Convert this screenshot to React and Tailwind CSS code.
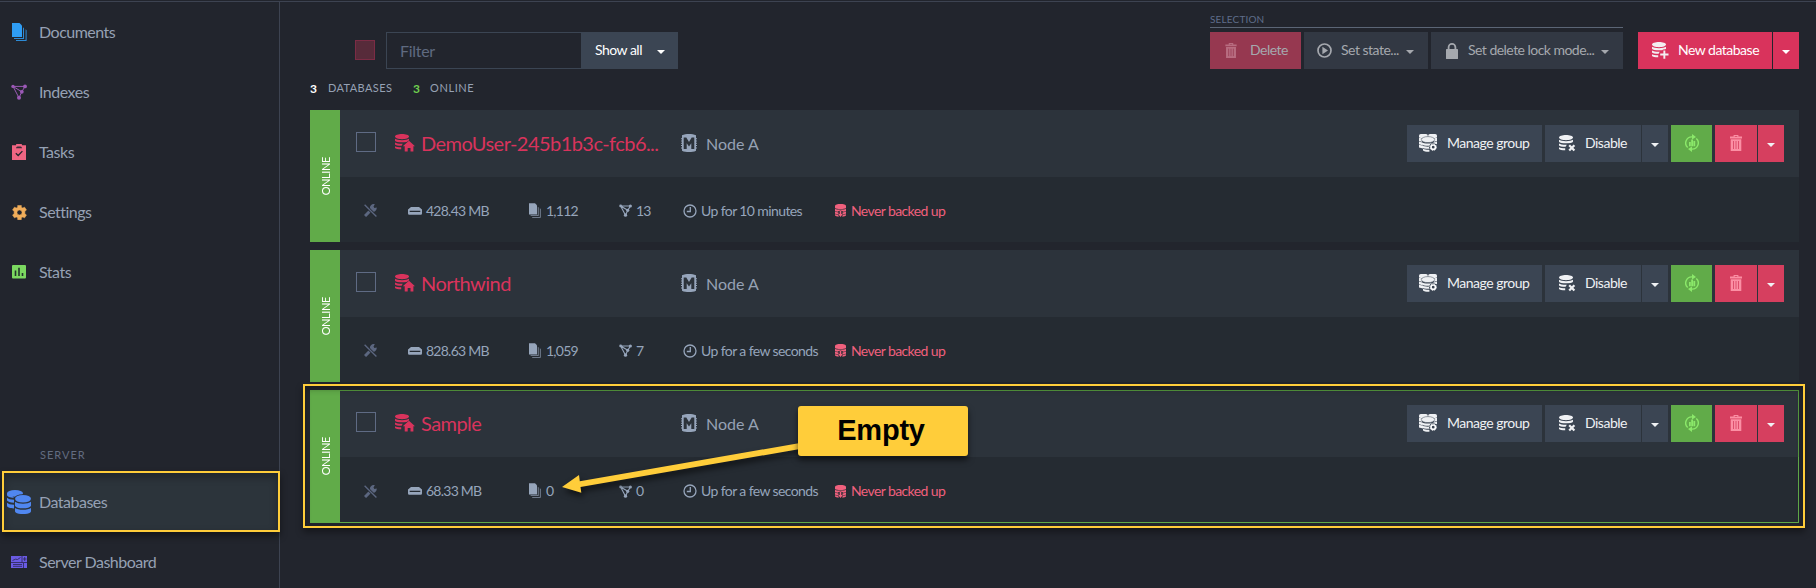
import React from "react";

/* ---------- icons ---------- */

const DocsIcon = ({ className }) => (
  <svg className={"shrink-0 " + className} viewBox="0 0 15 18" fill="currentColor">
    <path d="M0 0h7.500l2.500 2.500V14H0z" />
    <path d="M11 4.2l1 1V16H2v-1h9z" opacity=".85" />
    <path d="M13.6 6.2l1 1V18H4v-1h9.6z" opacity=".85" />
  </svg>
);

const IndexIcon = ({ className, weight = 1 }) => (
  <svg className={"shrink-0 " + className} viewBox="0 0 16 16" fill="currentColor" stroke="currentColor">
    <path d="M2 2.4h12M2 2.4l6 11.4M2 2.4l8.8 5.4M14 2.4l-3.2 5.4M10.8 7.8L8 13.8" fill="none" strokeWidth={weight} />
    <circle cx="2" cy="2.4" r="1.700" stroke="none" />
    <circle cx="14" cy="2.4" r="1.900" stroke="none" />
    <circle cx="10.8" cy="7.8" r="1.900" stroke="none" />
    <circle cx="8" cy="13.8" r="2" stroke="none" />
  </svg>
);

const TasksIcon = ({ className }) => (
  <svg className={className} viewBox="0 0 14 16">
    <path d="M0 1.2h4a3 2 0 0 1 6 0h4V16H0z" fill="currentColor" />
    <path d="M4 4.2c0-1.4 1-1.8 3-1.8s3 .4 3 1.8z" fill="#3a2c38" />
    <path d="M3.8 9.2l2.4 2.3 4.2-4.4" fill="none" stroke="#22252d" strokeWidth="1.3" />
  </svg>
);

const GearIcon = ({ className }) => (
  <svg className={className} viewBox="0 0 16 16">
    <path
      fill="currentColor"
      fillRule="evenodd"
      stroke="currentColor"
      strokeWidth=".6"
      strokeLinejoin="round"
      d="M6.1 .4h3.800v2l1.600.9 1.900-1 2 3.100-1.700 1.200v2.800l1.700 1.200-2 3.100-1.900-1-1.600.9v2H6.100v-2l-1.600-.9-1.900 1-2-3.100 1.700-1.200V6.600L.600 5.400l2-3.100 1.900 1 1.600-.9zM8 5.300a2.700 2.700 0 1 0 0 5.400 2.700 2.700 0 0 0 0-5.400z"
    />
  </svg>
);

const StatsIcon = ({ className }) => (
  <svg className={className} viewBox="0 0 14 14">
    <rect width="14" height="13.500" rx="1" fill="currentColor" />
    <path d="M2.700 5.500h1.600v5.500H2.700zM6.200 2.700h1.600V11H6.200zM9.700 8h1.600v3H9.700z" fill="#22352b" />
  </svg>
);

const DatabasesIcon = ({ className }) => (
  <svg className={className} viewBox="0 0 24 24" fill="currentColor">
    <ellipse cx="8" cy="3.400" rx="8" ry="3.400" />
    <path d="M0 3.400h3l4 4.400c-4 0-7-1.200-7-3z" />
    <path d="M0 7.800c1.200 1.200 3.400 1.900 7 2v3c-4-.2-6-1-7-2.200zM0 12.800c1.200 1.200 3.400 1.800 7 2v3.600c-4-.3-7-1.200-7-3z" />
    <ellipse cx="16" cy="9" rx="9" ry="4.800" fill="#2c333b" />
    <ellipse cx="16" cy="8.800" rx="8" ry="3.800" />
    <path d="M8 11.800c3 2.500 13 2.500 16 0v4c-1 3.400-15 3.400-16 0zM8 18c3 2.400 13 2.400 16 0v3.400c-1 3.600-15 3.600-16 0z" />
  </svg>
);

const DashboardIcon = ({ className }) => (
  <svg className={className} viewBox="0 0 16 12">
    <rect width="16" height="12" fill="currentColor" />
    <path d="M0 6.500h16M11 0v6.500M1.500 4.500l3-1.300 2 .3 3-2M2 8.500h9M2 10.300h9M12.500 7v5M12 3h3.500M13.700 1v4" fill="none" stroke="#2b2750" strokeWidth=".8" />
  </svg>
);

const stack = (
  <>
    <path d="M0 2.600C0 1 3.200 0 7 0s7 1 7 2.600S10.800 5.200 7 5.200 0 4.200 0 2.600z" />
    <path d="M0 4.800c2 1.900 12 1.900 14 0v2c-1 2-13 2-14 0z" />
    <path d="M0 8.600c1.200.8 4 1.300 7.800 1.200L6.600 11.800C3 11.800.5 11.200 0 10.400z" />
    <path d="M0 12.200c1.200.7 3.200 1 6.200 1.100v2C3 15.300.6 14.800 0 14z" />
  </>
);

const DbHomeIcon = ({ className }) => (
  <svg className={"shrink-0 " + className} viewBox="0 0 20 18" fill="currentColor">
    {stack}
    <path d="M14 6.800l6 5.400h-1.600v5.200h-2.900v-3.400h-2.800v3.400h-3v-5.200H7.800z" stroke="#2c333b" strokeWidth=".9" paintOrder="stroke" />
  </svg>
);

const DbPlusIcon = ({ className }) => (
  <svg className={"shrink-0 " + className} viewBox="0 0 17 17" fill="currentColor">
    {stack}
    <path d="M10.800 7.400h3.200v3h3v3.800h-3v3h-3.600v-3H7.600v-3.600h3.200z" className="fill-[#d9335c]" />
    <path d="M11.400 8.600h1.900v3h3.200v1.900h-3.200v3.200h-1.900v-3.200H8.200v-1.900h3.200z" />
  </svg>
);

const DbXIcon = ({ className }) => (
  <svg className={"shrink-0 " + className} viewBox="0 0 17 17" fill="currentColor">
    {stack}
    <path d="M8.400 8.800h8.500v8.200H8.400z" className="fill-[#3b4553]" />
    <path d="M10.200 10.200l5.200 5.400M15.400 10.200l-5.200 5.400" stroke="currentColor" strokeWidth="2.200" />
  </svg>
);

const DbGroupIcon = ({ className }) => (
  <svg className={"shrink-0 " + className} viewBox="0 0 18 18">
    <g fill="#eef0f3">
      <rect x="0" y="0" width="8.800" height="4" rx="1.800" />
      <rect x="9.200" y="0" width="8.800" height="4" rx="1.800" />
      <path d="M0 3.500l3 1v3.200l-3-.8zM0 7.400l3 1v2.600l-3-.8zM0 10.800l4 1v2.600l-4-.9zM18 3.500l-3 1v3.200l3-.8zM18 7.500l-3 1v1.300l3 .4z" />
      <ellipse cx="9" cy="5.600" rx="6.700" ry="3" stroke="#3b4553" strokeWidth=".5" />
      <path d="M2.600 7.900c2 2 10.800 2 12.800 0v2.300c-2 2-10.800 2-12.800 0zM2.800 11.200c1.600 1.200 4.800 1.600 7.600 1.400v2.200c-3.600.1-6.600-.3-7.600-1.600zM4 14.800c1.600.8 4 1.100 6.400 1v2c-2.800.1-5.400-.2-6.400-1.300z" />
    </g>
    <circle cx="14.200" cy="13.200" r="3.900" fill="#3b4553" />
    <circle cx="14.200" cy="13.200" r="2.200" fill="none" stroke="#fff" strokeWidth="1.600" />
    <circle cx="14.200" cy="13.200" r="3.200" fill="none" stroke="#fff" strokeWidth=".9" strokeDasharray="1.400 1.100" />
  </svg>
);

const NodeIcon = ({ className }) => (
  <svg className={"shrink-0 " + className} viewBox="0 0 16 18">
    <path
      fill="currentColor"
      fillRule="evenodd"
      d="M1 1.300C3 .3 5.400 0 8 0s5 .3 7 1.300v2.900h1v1h-1v1.300h1v1h-1v1.300h1v1h-1v1.300h1v1h-1v1.300h1v1h-1v2.300C13 17.700 10.600 18 8 18s-5-.3-7-1.300v-2.300H0v-1h1v-1.300H0v-1h1V9.800H0v-1h1V7.500H0v-1h1V5.200H0v-1h1zM2.700 3.500v11.500h3V9.200L8 12.400l2.300-3.200V15h3V3.500h-2.600L8 7.900 5.300 3.500z"
    />
  </svg>
);

const ToolsOffIcon = ({ className }) => (
  <svg className={"shrink-0 " + className} viewBox="0 0 13 13" fill="none" stroke="currentColor">
    <path d="M1 12l5.500-5.500" strokeWidth="3" />
    <path d="M5.800 4.300c0-3 2.600-4.800 5-4L9.500 2.600l.9 1.300 2.300-.5c.4 2.500-1.600 4.900-4.600 4.600z" fill="currentColor" stroke="none" />
    <path d="M.6.800l11.800 11.700" stroke="#252b32" strokeWidth="2.800" />
    <path d="M.6.800l11.800 11.700" strokeWidth="1.300" />
  </svg>
);

const DriveIcon = ({ className }) => (
  <svg className={"shrink-0 " + className} viewBox="0 0 14 8">
    <path
      d="M3 0h8l3 2.600v4a1.200 1.200 0 0 1-1.200 1.200H1.200A1.200 1.200 0 0 1 0 6.600v-4zM1.700 3.800v1.100h10.600V3.800z"
      fill="currentColor"
      fillRule="evenodd"
    />
  </svg>
);

const ClockIcon = ({ className }) => (
  <svg className={"shrink-0 " + className} viewBox="0 0 14 14" fill="none" stroke="currentColor">
    <circle cx="7" cy="7" r="6" strokeWidth="1.300" />
    <path d="M7.300 3v4.500H3.800" strokeWidth="1.300" />
  </svg>
);

const BackupIcon = ({ className }) => (
  <svg className={"shrink-0 " + className} viewBox="0 0 11 13" fill="currentColor">
    <path d="M0 1.700C0 .6 2.500 0 5.500 0S11 .6 11 1.700v2.300c-1 1.300-10 1.300-11 0z" />
    <path d="M0 4.700c2 1.200 9 1.200 11 0v2.500l-2.400.6L5.500 6.300 2.400 7.800 0 7.200zM0 7.800l3.500.8v1.700L0 9.800zM11 7.800l-3.500.8v1.700l3.500-.5zM0 10.300l3 .5 1 1.700c-2 0-3.800-.5-4-1zM11 10.300l-3 .5-1 1.700c2 0 3.800-.5 4-1zM4.700 6.800h1.600V10h1.500L5.500 13 3.200 10h1.500z" />
  </svg>
);

const TrashIcon = ({ className, line }) => (
  <svg className={"shrink-0 " + className} viewBox="0 0 12 16">
    <path d="M0 1.500h3.600V0h4.800v1.500H12v1.900H0zM4.700 1v.7h2.600V1zM.7 4.300h10.600V16H.7z" fill="currentColor" fillRule="evenodd" />
    <path d="M3.500 6v8M6 6v8M8.500 6v8" stroke={line} strokeWidth=".8" />
  </svg>
);

const PlayIcon = ({ className }) => (
  <svg className={"shrink-0 " + className} viewBox="0 0 15 15">
    <circle cx="7.500" cy="7.500" r="6.500" fill="none" stroke="currentColor" strokeWidth="1.700" />
    <path d="M5.400 3.800l5.600 3.700-5.600 3.700z" fill="currentColor" />
  </svg>
);

const LockIcon = ({ className }) => (
  <svg className={"shrink-0 " + className} viewBox="0 0 12 16">
    <rect y="6" width="12" height="10" rx=".6" fill="currentColor" />
    <path d="M2.600 7V4.300a3.400 3.400 0 0 1 6.800 0V7" fill="none" stroke="currentColor" strokeWidth="1.800" />
  </svg>
);

const RefreshStatsIcon = ({ className }) => (
  <svg className={"shrink-0 " + className} viewBox="0 0 14 18">
    <path d="M2.700 13.600A6.200 6.200 0 0 1 7.500 2.900M11.300 4.400a6.200 6.200 0 0 1-4.800 10.700" fill="none" stroke="currentColor" strokeWidth="1.400" />
    <path d="M7 0l4 2.900L7 5.600zM7 18l-4-2.900 4-2.700z" fill="currentColor" />
    <path d="M4 8h1.800v4.200H4zM6.200 5.500H8v6.700H6.200zM8.400 7h1.800v5.200H8.400z" fill="currentColor" />
  </svg>
);

const Caret = ({ className = "" }) => (
  <svg className={"h-1 w-2 shrink-0 " + className} viewBox="0 0 8 4" fill="currentColor">
    <path d="M0 0h8L4 4z" />
  </svg>
);

/* ---------- sidebar ---------- */

function NavItem({ icon, label }) {
  return (
    <div className="flex h-[60px] shrink-0 items-center">
      <div className="mr-px flex w-[38px] justify-center">{icon}</div>
      <span className="tracking-[-0.5px]">{label}</span>
    </div>
  );
}

function Sidebar() {
  return (
    <nav className="flex w-[280px] shrink-0 flex-col border-r border-[#3d4351] text-base text-[#96a1b4]">
      <NavItem icon={<DocsIcon className="h-[18px] w-[15px] text-[#2f9df4]" />} label="Documents" />
      <NavItem icon={<IndexIcon className="size-4 text-[#9b59b6]" />} label="Indexes" />
      <NavItem icon={<TasksIcon className="h-4 w-3.5 text-[#f06582]" />} label="Tasks" />
      <NavItem icon={<GearIcon className="size-[15px] text-[#f0ad5a]" />} label="Settings" />
      <NavItem icon={<StatsIcon className="size-3.5 text-[#7bd860]" />} label="Stats" />
      <div className="mt-[143px] h-[26px] shrink-0 pl-10 text-[11px] leading-[20px] tracking-[1px] text-[#626c80]">SERVER</div>
      <div className="relative z-10 -mr-px ml-0.5 h-[61px] shrink-0 border-2 border-[#ffcd3a] bg-[#2c343b] shadow-[0_4px_7px_rgba(0,0,0,.45),inset_0_4px_8px_rgba(0,0,0,.3)]">
        <div className="-ml-1 -mt-px">
          <NavItem icon={<DatabasesIcon className="size-6 shrink-0 text-[#5087f0]" />} label="Databases" />
        </div>
      </div>
      <NavItem icon={<DashboardIcon className="h-3 w-4 text-[#6a5be2]" />} label="Server Dashboard" />
    </nav>
  );
}

/* ---------- toolbar ---------- */

const btn = "flex h-[37px] items-center whitespace-nowrap text-sm tracking-[-0.5px]";

function Toolbar() {
  return (
    <div className="flex h-[67px] items-end">
      <div className="mb-[9px] ml-[45px] size-5 border border-[#7c2c45] bg-[#572b3a]" />
      <div className="ml-[11px] flex h-[37px]">
        <div className="w-[195px] border border-r-0 border-[#3b4553] pl-[13px] text-base leading-[36px] tracking-[-0.3px] text-[#5f6a80]">
          Filter
        </div>
        <div className={btn + " w-[97px] justify-between bg-[#3b4553] pl-3.5 pr-[13px] text-white"}>
          <span className="pb-0.5">Show all</span>
          <Caret className="mt-0.5" />
        </div>
      </div>

      <div className="ml-[532px] w-[413px]">
        <div className="mb-1 border-b border-[#5b6575] text-[10px] leading-[15px] tracking-[0.15px] text-[#5f6d8a]">SELECTION</div>
        <div className="flex gap-[3px] text-[#a5a8ae]">
          <div className={btn + " w-[91px] bg-[#963850] pl-[15px]"}>
            <TrashIcon className="h-[15px] w-3 text-[#b86c80]" line="#963850" />
            <span className="pb-0.5 pl-[13px]">Delete</span>
          </div>
          <div className={btn + " w-[124px] bg-[#323843] pl-[13px]"}>
            <PlayIcon className="size-[15px]" />
            <span className="pb-0.5 pl-[9px]">Set state...</span>
            <Caret className="ml-[7px] mt-0.5" />
          </div>
          <div className={btn + " w-[192px] bg-[#323843] pl-[15px]"}>
            <LockIcon className="h-4 w-3" />
            <span className="pb-0.5 pl-[10px] tracking-[-0.53px]">Set delete lock mode...</span>
            <Caret className="ml-[7px] mt-0.5" />
          </div>
        </div>
      </div>

      <div className="ml-[15px] flex gap-px text-white">
        <div className={btn + " w-[134px] bg-[#d9335c] pl-3.5"}>
          <DbPlusIcon className="size-[17px] text-[#f3eef1]" />
          <span className="pb-0.5 pl-[9px]">New database</span>
        </div>
        <div className={btn + " w-[26px] justify-center bg-[#d9335c]"}>
          <Caret className="mt-0.5" />
        </div>
      </div>
    </div>
  );
}

/* ---------- database cards ---------- */

function Actions() {
  return (
    <div className="mr-[15px] flex gap-[3px] text-[#eff1f4]">
      <div className={btn + " w-[135px] bg-[#3b4553] pl-3"}>
        <DbGroupIcon className="mb-0.5 size-[18px]" />
        <span className="pb-0.5 pl-2.5">Manage group</span>
      </div>
      <div className="flex gap-px">
        <div className={btn + " w-24 bg-[#3b4553] pl-3.5"}>
          <DbXIcon className="mb-px size-[17px]" />
          <span className="pb-0.5 pl-[9px]">Disable</span>
        </div>
        <div className={btn + " w-[26px] justify-center bg-[#3b4553]"}>
          <Caret className="mt-[3px]" />
        </div>
      </div>
      <div className={btn + " w-[41px] justify-center bg-[#61ab49]"}>
        <RefreshStatsIcon className="mb-0.5 h-[18px] w-3.5 text-[#8be86a]" />
      </div>
      <div className="flex gap-px">
        <div className={btn + " w-[42px] justify-center bg-[#d63f5f]"}>
          <TrashIcon className="mb-0.5 h-4 w-3 text-[#fb8fa4]" line="#d63f5f" />
        </div>
        <div className={btn + " w-[26px] justify-center bg-[#d63f5f]"}>
          <Caret className="mt-[3px]" />
        </div>
      </div>
    </div>
  );
}

function DatabaseCard({ db }) {
  return (
    <div className={"flex " + (db.selected ? "h-[133px]" : "h-[132px]")}>
      <div className="flex w-[30px] items-center justify-center bg-[#61ab49] pl-px">
        <span className="rotate-180 text-[11px] leading-4 tracking-[-0.4px] text-white [writing-mode:vertical-rl]">ONLINE</span>
      </div>
      <div
        className={
          "flex flex-1 flex-col bg-[#252b32] " +
          (db.selected ? "shadow-[inset_0_-1px_0_#61ab49,inset_-1px_0_0_#61ab49]" : "")
        }
      >
        <div
          className={
            "flex h-[67px] items-center bg-[#2c333b] " +
            (db.selected ? "shadow-[inset_0_1px_0_#56993f,inset_-1px_0_0_#56993f]" : "")
          }
        >
          <div className="mb-[3px] ml-4 size-5 shrink-0 border border-[#5f6b84]" />
          <DbHomeIcon className="mb-px ml-[19px] h-[18px] w-5 text-[#d9335c]" />
          <div className="w-[266px] shrink-0 whitespace-nowrap pb-0.5 pl-1.5 text-xl tracking-[-0.55px] text-[#d9335c]">{db.name}</div>
          <NodeIcon className="mb-px h-[18px] w-4 text-[#96a5bb]" />
          <span className="flex-1 pl-[9px] pt-px text-base text-[#96a1b4]">Node A</span>
          <Actions />
        </div>
        <div className="flex flex-1 items-center whitespace-nowrap pb-0.5 pl-6 pt-1 text-sm tracking-[-0.6px] text-[#96a5bb]">
          <ToolsOffIcon className="h-[13px] w-[13px] text-[#5c6780]" />
          <DriveIcon className="ml-[31px] h-2 w-3.5" />
          <span className="w-[107px] pl-1 tracking-[-0.75px]">{db.size}</span>
          <DocsIcon className="mb-px h-[15px] w-[12px]" />
          <span className="w-[78px] pl-[5px] tracking-[-0.75px]">{db.docs}</span>
          <IndexIcon className="size-[13px]" weight={1.4} />
          <span className="w-[51px] pl-1 tracking-[-0.75px]">{db.indexes}</span>
          <ClockIcon className="size-3.5" />
          <span className="w-[138px] pl-1">{db.uptime}</span>
          <BackupIcon className="h-[13px] w-[11px] text-[#f0607d]" />
          <span className="pl-[5px] text-[#f0607d]">Never backed up</span>
        </div>
      </div>
    </div>
  );
}

const databases = [
  { name: "DemoUser-245b1b3c-fcb6...", size: "428.43 MB", docs: "1,112", indexes: "13", uptime: "Up for 10 minutes" },
  { name: "Northwind", size: "828.63 MB", docs: "1,059", indexes: "7", uptime: "Up for a few seconds" },
  { name: "Sample", size: "68.33 MB", docs: "0", indexes: "0", uptime: "Up for a few seconds", selected: true },
];

/* Callout drawn over the page: frame, arrow and label. */
function Callout() {
  return (
    <>
      <div className="absolute left-[303px] top-[384px] h-36 w-[1502px] border-2 border-[#ffcd3a] shadow-[0_4px_7px_rgba(0,0,0,.4),inset_0_3px_6px_rgba(0,0,0,.3)]" />
      <svg className="absolute left-[550px] top-[430px] h-[80px] w-[260px] drop-shadow-[2px_4px_3px_rgba(0,0,0,.6)]" viewBox="0 0 260 80" fill="#ffcd3a">
        <path d="M12 57l17-12 .8 6.300L250 13v6L30.500 57l.8 5.700z" />
      </svg>
      <div className="absolute left-[798px] top-[406px] flex h-[50px] w-[170px] items-center justify-center rounded-[3px] bg-[#ffcd3a] pb-px pr-1 font-['Liberation_Sans',sans-serif] text-[29px] font-bold tracking-[-0.2px] text-black shadow-[0_4px_6px_rgba(0,0,0,.6)]">
        Empty
      </div>
    </>
  );
}

export default function App() {
  return (
    <div className="relative h-[588px] w-[1816px] overflow-hidden bg-[#22252d] pt-px font-['Lato',sans-serif]">
      <div className="flex h-[587px] border-t border-[#3d4351]">
        <Sidebar />
        <main className="flex w-[1519px] flex-col pl-[30px]">
          <Toolbar />
          <div className="flex h-[41px] items-center pb-0.5 text-[11px] text-[#96a1b4]">
            <span className="w-[18px] text-xs font-bold text-white">3</span>
            <span className="w-[85px] tracking-[0.4px]">DATABASES</span>
            <span className="w-[17px] text-xs font-bold text-[#6fd04f]">3</span>
            <span className="tracking-[0.6px]">ONLINE</span>
          </div>
          <div className="flex flex-col gap-2">
            {databases.map((db) => (
              <DatabaseCard key={db.name} db={db} />
            ))}
          </div>
        </main>
      </div>
      <Callout />
    </div>
  );
}
